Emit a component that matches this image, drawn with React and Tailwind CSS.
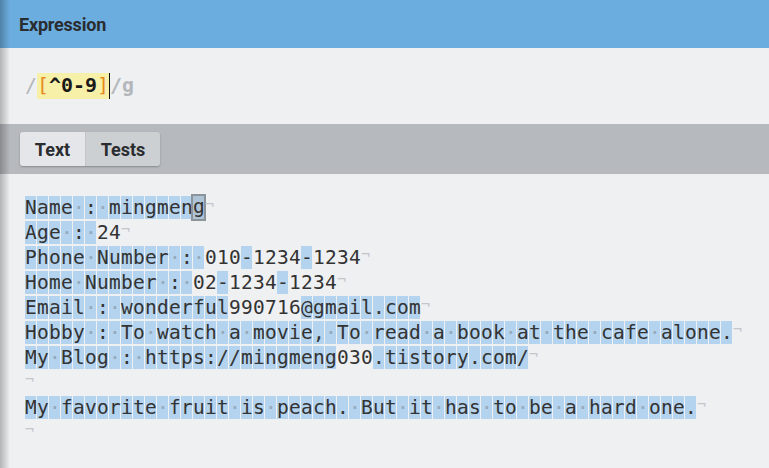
import React from "react";

const lines = [
  "Name : mingmeng",
  "Age : 24",
  "Phone Number : 010-1234-1234",
  "Home Number : 02-1234-1234",
  "Email : wonderful990716@gmail.com",
  "Hobby : To watch a movie, To read a book at the cafe alone.",
  "My Blog : https://mingmeng030.tistory.com/",
  "",
  "My favorite fruit is peach. But it has to be a hard one.",
  "",
];

const mono = { fontFamily: '"DejaVu Sans Mono", "Liberation Mono", monospace' };

function Char({ ch, selected }) {
  const matched = !/[0-9]/.test(ch);
  const base = "inline-block w-[12px] h-[25px] pr-px pt-px pb-[1px] bg-clip-content leading-[23px] text-center";
  if (selected) {
    return (
      <span className="inline-block w-[12px] h-[25px] pr-px pt-px pb-[1px]">
        <span className="block w-[11px] h-[23px] leading-[21px] bg-[#aec3d6] outline-2 outline-[#8b949b] text-[#333]">
          {ch}
        </span>
      </span>
    );
  }
  if (ch === " ") {
    return <span className={`${base} bg-[#b3d3ee] text-[#97a9ba]`}>·</span>;
  }
  return (
    <span className={`${base} text-[#333] ${matched ? "bg-[#b3d3ee]" : ""}`}>
      {ch}
    </span>
  );
}

function Line({ text, index }) {
  const chars = text.split("");
  return (
    <div className="flex h-[25px]">
      {chars.map((ch, i) => (
        <Char key={i} ch={ch} selected={index === 0 && i === chars.length - 1} />
      ))}
      <span className="inline-block w-[12px] h-[25px] leading-[21px] text-[#c3c6ca] text-[15px]">¬</span>
    </div>
  );
}

export default function App() {
  return (
    <div className="relative w-[769px] h-[468px] overflow-hidden bg-[#eff0f2]" style={{ fontFamily: "Roboto, sans-serif" }}>
      <div className="h-[48px] bg-[#6cade0] flex items-center pl-[19px]">
        <h1 className="text-[18px] font-bold text-[#2a2d30] tracking-[-0.2px]">Expression</h1>
      </div>

      <div className="h-[76px] flex items-center pl-[25px] text-[19.93px]" style={mono}>
        <span className="text-[#b3b6ba]">/</span>
        <span className="flex bg-[#f7f0a8] h-[26px] items-center">
          <span className="text-[#e8891c]">[</span>
          <span className="text-[#1a1a1a] font-bold">^0-9</span>
          <span className="text-[#e8891c]">]</span>
        </span>
        <span className="w-px h-[26px] bg-[#111]"></span>
        <span className="text-[#b3b6ba] font-bold">/g</span>
      </div>

      <div className="h-[50px] bg-[#b6b9bd] flex items-center pl-[20px]">
        <div className="flex h-[34px] rounded-[3px] overflow-hidden shadow-[0_1px_2px_rgba(0,0,0,0.25)] text-[18px] font-bold text-[#2a2d30]">
          <div className="w-[65px] bg-[#e4e6e9] flex items-center justify-center">Text</div>
          <div className="w-px bg-[#c2c5c9]"></div>
          <div className="w-[74px] bg-[#cdd0d3] flex items-center justify-center">Tests</div>
        </div>
      </div>

      <div className="pt-[21px] pl-[25px] text-[19.5px]" style={mono}>
        {lines.map((t, i) => (
          <Line key={i} text={t} index={i} />
        ))}
      </div>

      <div className="pointer-events-none absolute left-0 top-0 h-full w-[10px] bg-linear-to-r from-black/25 to-transparent"></div>
    </div>
  );
}
